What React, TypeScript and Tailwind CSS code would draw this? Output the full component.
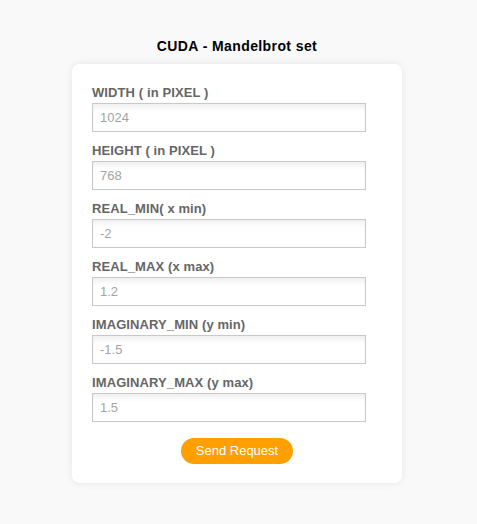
const FIELDS = [
  { label: "WIDTH ( in PIXEL )", placeholder: "1024" },
  { label: "HEIGHT ( in PIXEL )", placeholder: "768" },
  { label: "REAL_MIN( x min)", placeholder: "-2" },
  { label: "REAL_MAX (x max)", placeholder: "1.2" },
  { label: "IMAGINARY_MIN (y min)", placeholder: "-1.5" },
  { label: "IMAGINARY_MAX (y max)", placeholder: "1.5" },
]

export default function App() {
  return (
    <div className="min-h-[524px] bg-[#f9f9f9] pr-[3px] pt-[38px] font-['Liberation_Sans',Arial,sans-serif]">
      <h1 className="text-center text-[14px] font-bold leading-[16px] tracking-[0.4px] text-black">CUDA - Mandelbrot set</h1>

      <form
        className="mx-auto mt-[10px] w-[330px] rounded-[8px] bg-white pb-[19px] pl-[20px] pr-[36px] pt-[21px] shadow-[0_0_8px_rgba(0,0,0,0.08)]"
        onSubmit={(e) => e.preventDefault()}
      >
        {FIELDS.map((f, i) => (
          <div key={f.label} className={i > 0 ? "mt-[11px]" : ""}>
            <label className="block text-[13px] font-bold leading-[15px] tracking-[0.1px] text-[#666]">{f.label}</label>
            <input
              type="text"
              placeholder={f.placeholder}
              className="mt-[3px] block h-[29px] w-[274px] border border-[#c8c8c8] bg-white px-[7px] text-[13px] text-[#555] shadow-[inset_0_6px_6px_-3px_rgba(0,0,0,0.08)] outline-none placeholder:text-[#a3a3a3]"
            />
          </div>
        ))}

        <div className="mt-[16px] flex justify-center pl-[16px]">
          <button
            type="submit"
            className="h-[26px] w-[112px] rounded-full bg-[#ff9f00] text-[13px] leading-[26px] text-white"
          >
            Send Request
          </button>
        </div>
      </form>
    </div>
  )
}
